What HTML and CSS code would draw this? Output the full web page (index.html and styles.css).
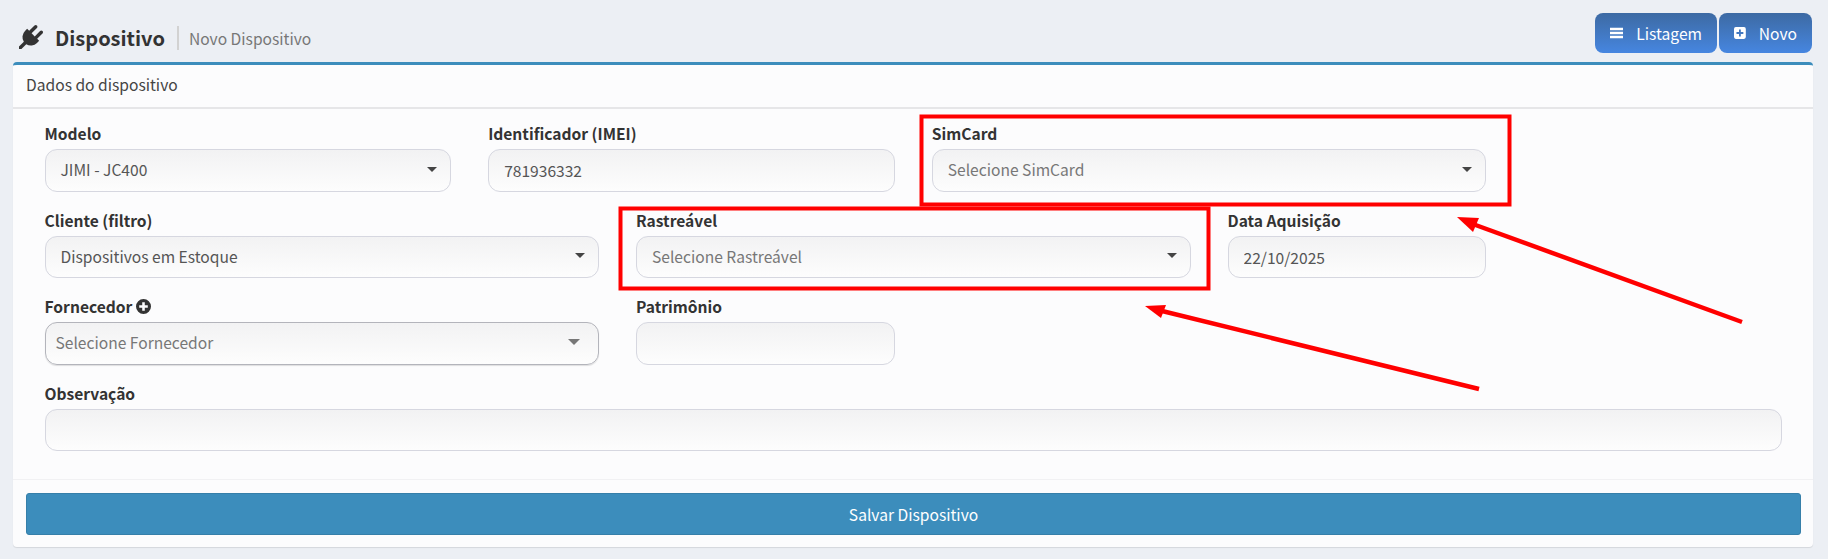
FILE: index.html
```html
<!DOCTYPE html>
<html lang="en">
<head>
  <meta charset="UTF-8">
  <title>Dispositivo - Novo Dispositivo</title>
  <link rel="stylesheet" href="styles.css">
</head>
<body>
  <div class="page-head">
    <div class="page-title">
      <svg class="plug-icon" viewBox="0 0 1792 1792"><path d="M1755 453q37 38 37 90.5t-37 90.5l-401 400 150 150-160 160q-163 163-389.5 186.5t-411.5-100.5l-362 362h-181v-181l362-362q-124-185-100.5-411.5t186.5-389.5l160-160 150 150 400-401q38-37 91-37t90 37 37 90.5-37 90.5l-400 401 234 234 401-400q38-37 91-37t90 37z"/></svg>
      <h1>Dispositivo</h1>
      <small>Novo Dispositivo</small>
    </div>
    <div class="head-actions">
      <a class="head-btn btn-list">
        <svg class="btn-icon" viewBox="0 0 14 14"><rect y="1.5" width="14" height="2.6"/><rect y="5.7" width="14" height="2.6"/><rect y="9.9" width="14" height="2.6"/></svg>
        Listagem
      </a>
      <a class="head-btn btn-new">
        <svg class="btn-icon" viewBox="0.5 0.5 13 13"><path fill-rule="evenodd" d="M2.5 0.5h9a2 2 0 0 1 2 2v9a2 2 0 0 1-2 2h-9a2 2 0 0 1-2-2v-9a2 2 0 0 1 2-2zM6 3.2v2.8H3.2v2H6v2.8h2V8h2.8V6H8V3.2z"/></svg>
        Novo
      </a>
    </div>
  </div>

  <div class="card">
    <div class="card-header">Dados do dispositivo</div>
    <form class="card-body">
      <div class="field span-3">
        <label>Modelo</label>
        <div class="select"><span>JIMI - JC400</span><i class="caret"></i></div>
      </div>
      <div class="field span-3">
        <label>Identificador (IMEI)</label>
        <input class="control" type="text" value="781936332">
      </div>
      <div class="field span-4">
        <label>SimCard</label>
        <div class="select placeholder"><span>Selecione SimCard</span><i class="caret"></i></div>
      </div>
      <div class="field span-2"></div>

      <div class="field span-4">
        <label>Cliente (filtro)</label>
        <div class="select"><span>Dispositivos em Estoque</span><i class="caret"></i></div>
      </div>
      <div class="field span-4">
        <label>Rastreável</label>
        <div class="select placeholder"><span>Selecione Rastreável</span><i class="caret"></i></div>
      </div>
      <div class="field span-2">
        <label>Data Aquisição</label>
        <input class="control" type="text" value="22/10/2025">
      </div>
      <div class="field span-2"></div>

      <div class="field span-4">
        <label>Fornecedor
          <svg class="add-icon" viewBox="0 0 14 14"><path fill-rule="evenodd" d="M7 0a7 7 0 1 1 0 14A7 7 0 0 1 7 0zM5.8 3v2.800H3v2.400h2.800V11h2.400V8.200H11V5.800H8.200V3z"/></svg>
        </label>
        <div class="select native"><span>Selecione Fornecedor</span><i class="caret"></i></div>
      </div>
      <div class="field span-2">
        <label>Patrimônio</label>
        <input class="control" type="text">
      </div>
      <div class="field span-6"></div>

      <div class="field span-12">
        <label>Observação</label>
        <input class="control" type="text">
      </div>
    </form>
    <div class="card-footer">
      <button type="button">Salvar Dispositivo</button>
    </div>
  </div>

  <!-- marcacoes vermelhas por cima do print -->
  <svg class="marks" viewBox="0 0 1828 559">
    <rect x="921.500" y="116.500" width="588" height="88"/>
    <rect x="620.500" y="208.500" width="588" height="80"/>
    <line x1="1742" y1="322" x2="1470" y2="223"/>
    <polygon points="1457,217 1479,218 1473,232"/>
    <line x1="1479" y1="389" x2="1158" y2="310"/>
    <polygon points="1145,306 1166,305 1161,318"/>
  </svg>
</body>
</html>
```

FILE: styles.css
```css
* {
  box-sizing: border-box;
}

body {
  margin: 0;
  height: 559px;
  padding: 13px 15px 0 13px;
  overflow: hidden;
  position: relative;
  background-color: #eceff4;
  font-family: "Noto Sans CJK SC", "Noto Sans", sans-serif;
  font-size: 15.6px;
  line-height: 22px;
  color: #444;
}

.page-head {
  display: flex;
  justify-content: space-between;
  height: 49px;
}

.page-title {
  display: flex;
  align-items: center;
  height: 49px;
  padding-left: 6px;
  padding-top: 1px;
}

.plug-icon {
  width: 24px;
  height: 24px;
  margin-top: -3px;
  fill: #333;
}

h1 {
  margin: 0 0 0 12px;
  font-size: 20px;
  font-weight: 700;
  line-height: 26px;
  color: #333;
}

small {
  margin-left: 12px;
  padding-left: 10px;
  border-left: 2px solid #d2d2d2;
  font-size: 15.6px;
  line-height: 24px;
  color: #777;
}

.head-actions {
  display: flex;
  gap: 2px;
  height: 40px;
  margin-right: 1px;
}

.head-btn {
  display: flex;
  align-items: center;
  height: 40px;
  padding: 0 15px;
  border-radius: 8px;
  background: linear-gradient(#3d6aa3, #4686e0);
  color: #fff;
}

.btn-list {
  width: 122px;
}

.btn-new {
  width: 93px;
}

.btn-icon {
  width: 14px;
  height: 14px;
  margin-right: 13px;
  fill: #fff;
}

.card {
  height: 485px;
  border-top: 3px solid #3c8dbc;
  border-radius: 4px;
  background-color: #fcfcfd;
  box-shadow: 0 1px 1px rgba(0, 0, 0, 0.1);
}

.card-header {
  height: 44px;
  padding: 0 13px;
  border-bottom: 2px solid #e6e6e8;
  line-height: 39px;
}

.card-body {
  display: grid;
  grid-template-columns: repeat(12, 1fr);
  column-gap: 37px;
  row-gap: 19px;
  height: 371px;
  padding: 15px 31px 0 31.5px;
  border-bottom: 1px solid #f1f1f3;
  align-content: start;
}

.field label {
  display: block;
  height: 18px;
  margin-bottom: 7px;
  font-weight: 700;
  line-height: 18px;
  color: #333;
}

.span-2 { grid-column: span 2; }
.span-3 { grid-column: span 3; }
.span-4 { grid-column: span 4; }
.span-6 { grid-column: span 6; }
.span-12 { grid-column: span 12; }

.control,
.select {
  display: flex;
  align-items: center;
  width: 100%;
  height: 42.5px;
  padding: 0 15px;
  border: 1px solid #d6d7e0;
  border-radius: 12px;
  background: linear-gradient(#f2f2f3, #fdfdfd);
  font: inherit;
  color: #555;
}

.select {
  justify-content: space-between;
  padding-right: 13px;
  padding-bottom: 2px;
}

.placeholder {
  color: #777;
}

.native {
  padding: 0 18px 2px 10px;
  border-color: #b3b4bb;
  box-shadow: 0 1px 1px rgba(0, 0, 0, 0.12);
  color: #777;
}

.caret {
  width: 0;
  height: 0;
  border-left: 5px solid transparent;
  border-right: 5px solid transparent;
  border-top: 5px solid #444;
}

.native .caret {
  border-left-width: 6px;
  border-right-width: 6px;
  border-top: 6px solid #777;
}

.add-icon {
  width: 15px;
  height: 15px;
  margin-left: 0;
  vertical-align: -1px;
  fill: #333;
}

.card-footer {
  padding: 13px 12px 0 13px;
}

button {
  display: block;
  width: 100%;
  height: 42px;
  padding-bottom: 2px;
  border: 1px solid #367fa9;
  border-radius: 3px;
  background-color: #3c8dbc;
  font: inherit;
  color: #fff;
}

.marks {
  position: absolute;
  top: 0;
  left: 0;
  width: 1828px;
  height: 559px;
  pointer-events: none;
}

.marks rect,
.marks line {
  fill: none;
  stroke: #ff0000;
  stroke-width: 4;
}

.marks line {
  stroke-width: 4.5;
}

.marks polygon {
  fill: #ff0000;
}
```
